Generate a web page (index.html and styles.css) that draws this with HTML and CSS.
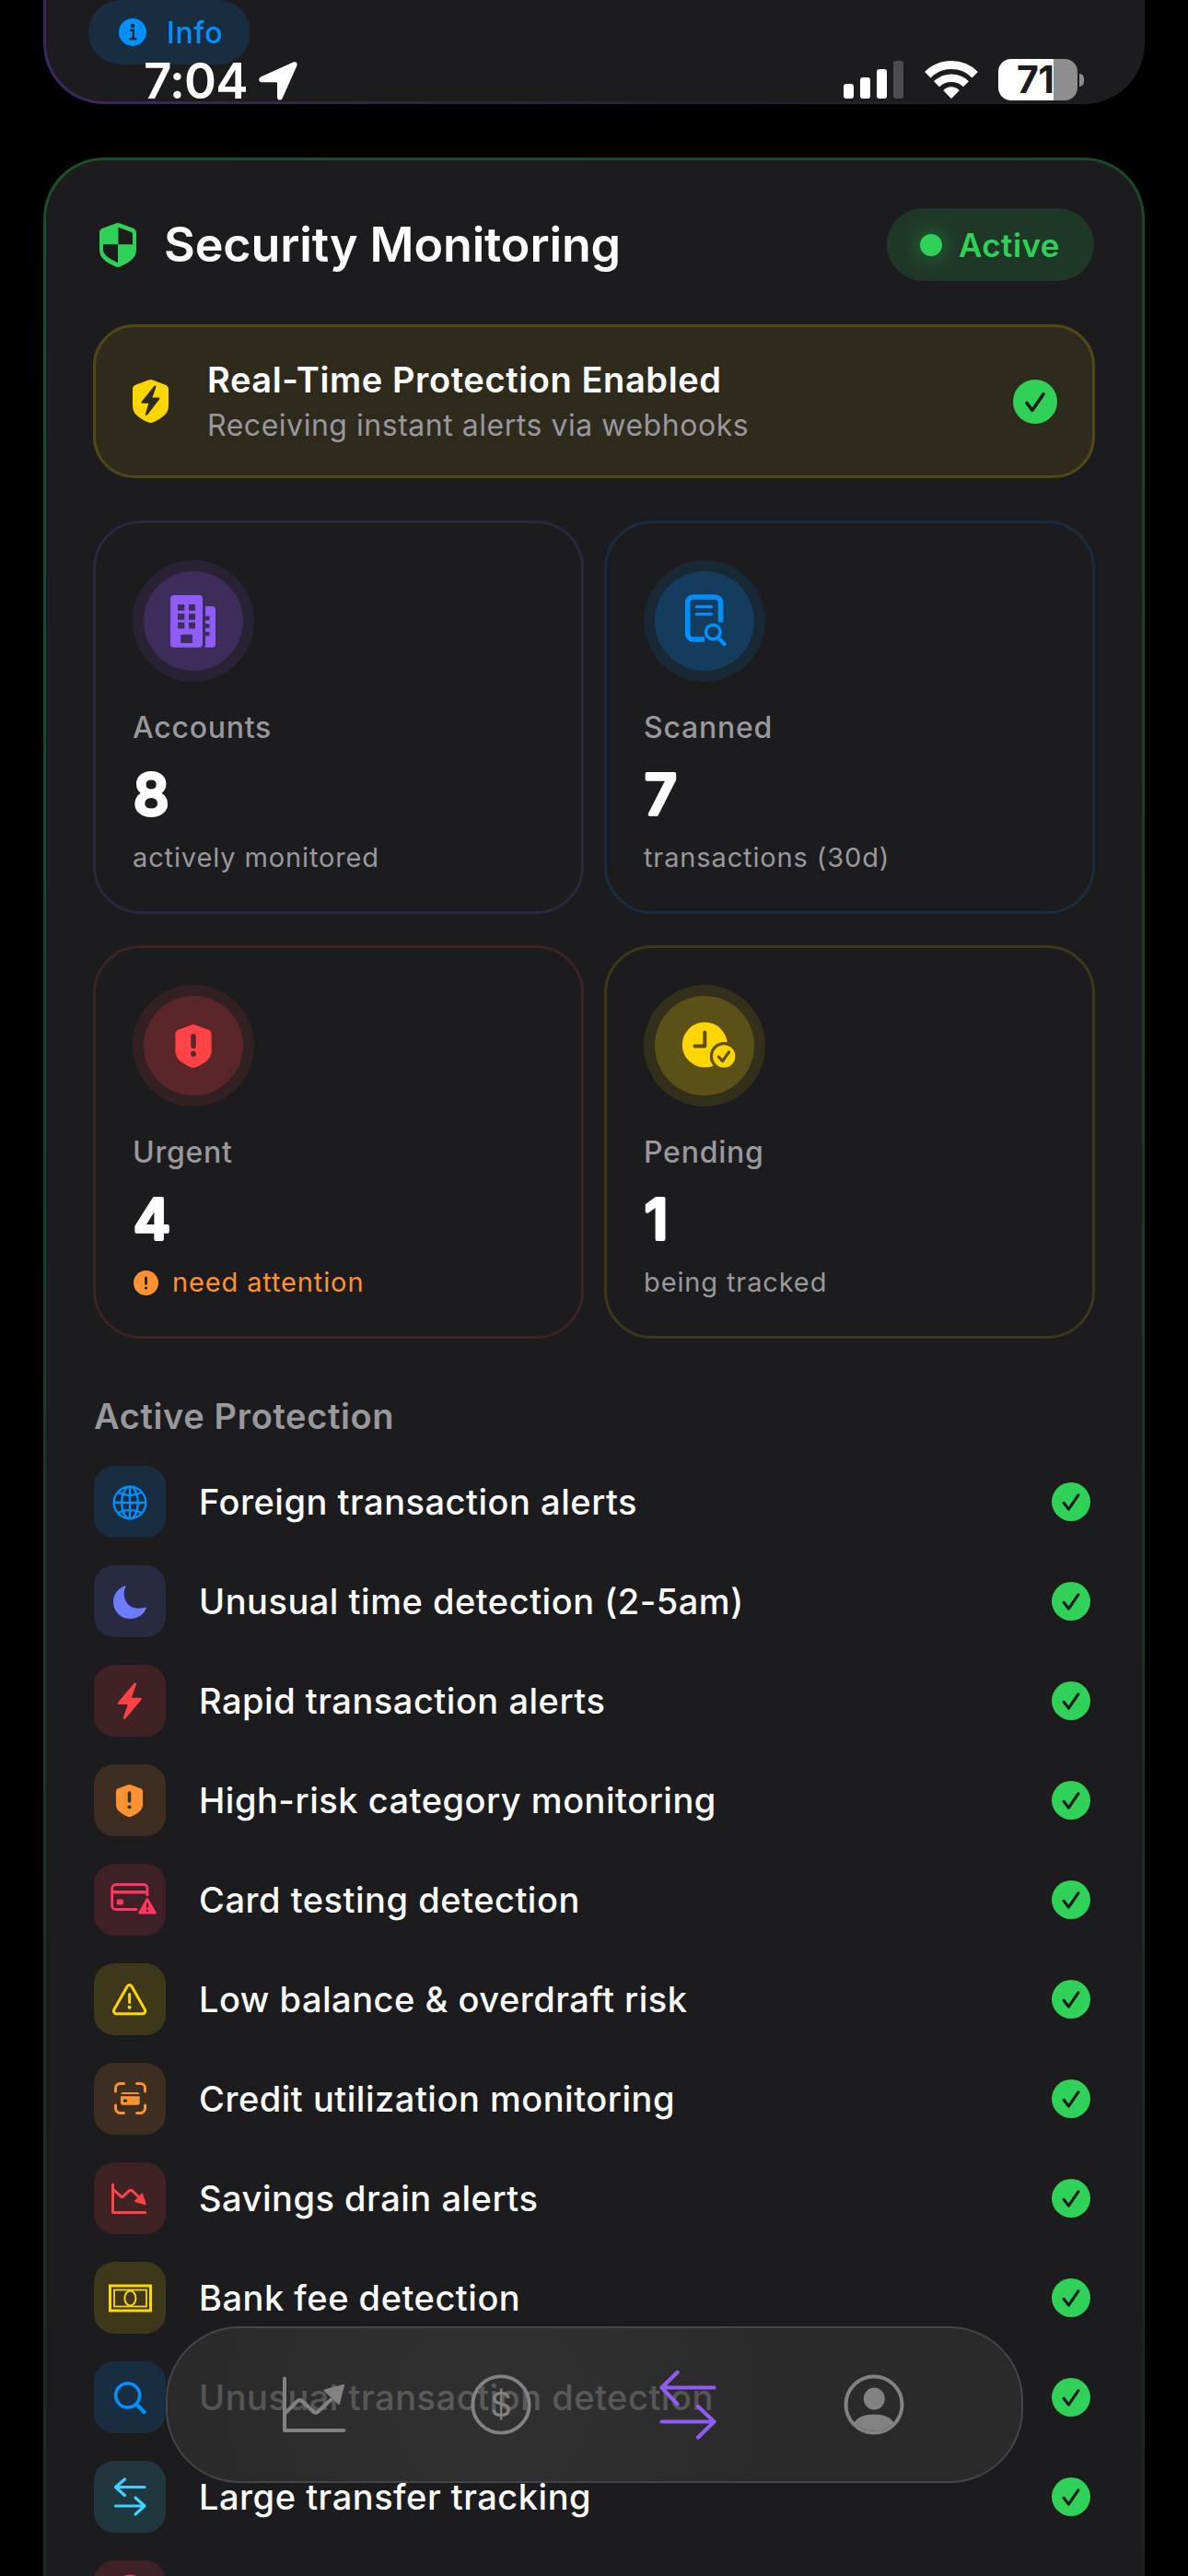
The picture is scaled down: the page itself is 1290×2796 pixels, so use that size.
FILE: index.html
```html
<!DOCTYPE html>
<html lang="en">
<head>
    <meta charset="UTF-8">
    <meta name="viewport" content="width=device-width, initial-scale=1.0">
    <title>Security Monitoring</title>
    <link rel="stylesheet" href="styles.css">
</head>
<body>
    <!-- Shared icon shapes -->
    <svg class="defs" width="0" height="0">
        <symbol id="check" viewBox="0 0 48 48">
            <circle cx="24" cy="24" r="24" fill="#30d158"/>
            <path d="M15 25.500L21 33.300L33 15.800" fill="none" stroke="#1c1c1e" stroke-width="3.600" stroke-linecap="round" stroke-linejoin="round"/>
        </symbol>
        <symbol id="shield" viewBox="0 0 40 48">
            <path fill="currentColor" d="M20 0c1 0 2 .3 3 .7l13 4.800c2.700 1 4 2.500 4 5V29c0 8.500-6 13-17 18.300-1 .5-2 .7-3 .7s-2-.2-3-.7C6 42 0 37.500 0 29V10.500C0 8 1.300 6.500 4 5.500L17 .7C18 .3 19 0 20 0Z"/>
        </symbol>
    </svg>

    <div class="status-bar">
        <div class="status-left">
            <span class="time">7:04</span>
            <svg width="42" height="42" viewBox="0 0 42 42"><path fill="#fff" d="M37.500.6L2.500 16.300C-1 18-.3 22.300 3.300 22.300H18.500C19.500 22.300 20 22.800 20 23.800V38.500C20 42.300 24.300 42.500 25.700 39.500L41.300 4.500C42.500 1.500 40.500-.7 37.500.6Z"/></svg>
        </div>
        <div class="status-right">
            <svg width="65" height="45" viewBox="0 0 65 45" fill="#fff">
                <rect x="0" y="27" width="11" height="16" rx="3"/>
                <rect x="18" y="20" width="11" height="23" rx="3"/>
                <rect x="36" y="11" width="11" height="32" rx="3"/>
                <rect x="54" y="2" width="11" height="41" rx="3" opacity=".22"/>
            </svg>
            <svg class="wifi" width="58" height="45" viewBox="0 0 58 45" fill="none" stroke="#fff">
                <path d="M3.300 17.200A36.500 36.500 0 0 1 54.700 17.200" stroke-width="9"/>
                <path d="M13 27.300A22.700 22.700 0 0 1 45 27.300" stroke-width="8.500"/>
                <path d="M29 43L20.300 34.300C24.500 29 33.500 29 37.700 34.300Z" fill="#fff" stroke="none"/>
            </svg>
            <div class="battery"><span>71</span></div>
            <div class="battery-nub"></div>
        </div>
    </div>

    <section class="card card-prev">
        <div class="info-pill">
            <svg width="30" height="30" viewBox="0 0 30 30">
                <circle cx="15" cy="15" r="15" fill="#0091ff"/>
                <circle cx="15" cy="8" r="2.300" fill="#192d40"/>
                <path d="M12 12.800H15.800V22M11.300 22.300H19.500" fill="none" stroke="#192d40" stroke-width="2.400"/>
            </svg>
            <span>Info</span>
        </div>
    </section>

    <section class="card card-security">
        <header class="card-header">
            <svg width="40" height="48" viewBox="0 0 40 48" color="#30d158">
                <use href="#shield"/>
                <path fill="#1c1c1e" d="M20.500 4.800L33.500 9.600C35 10.200 36 11 36 12.500V23.300H20.500ZM4 23.300H20V43.200C9 38 4 34.500 4 28Z"/>
            </svg>
            <h1>Security Monitoring</h1>
            <div class="active-pill"><i class="dot"></i><span>Active</span></div>
        </header>

        <div class="banner">
            <svg width="39" height="47" viewBox="0 0 40 48" color="#ffd600">
                <use href="#shield"/>
                <path fill="#2e2b1d" d="M23.500 7.500L10 24.500C9.300 25.500 9.800 26.300 11 26.300H17.800L14.300 38C13.800 39.800 15.500 40.300 16.500 39L29.700 22C30.500 21 30 20 28.800 20H22L26 8.300C26.500 6.500 24.700 6 23.500 7.500Z"/>
            </svg>
            <div class="banner-text">
                <h2>Real-Time Protection Enabled</h2>
                <p>Receiving instant alerts via webhooks</p>
            </div>
            <svg width="48" height="48"><use href="#check"/></svg>
        </div>

        <div class="stats">
            <div class="stat purple">
                <div class="stat-icon">
                    <svg viewBox="0 0 132 132" fill="currentColor">
                        <path fill-rule="evenodd" d="M45 38H72A4 4 0 0 1 76 42V90.700A4 4 0 0 1 72 94.700H45A4 4 0 0 1 41 90.700V42A4 4 0 0 1 45 38ZM49 48V54.700H56.300V48ZM61 48V54.700H68V48ZM49 58V64.700H56.300V58ZM61 58V64.700H68V58ZM49 67.500V74.200H56.300V67.500ZM61 67.500V74.200H68V67.500ZM53.500 80.700A1.200 1.200 0 0 0 52.300 82V90H65V82A1.200 1.200 0 0 0 63.800 80.700Z"/>
                        <path d="M79 50H86A4 4 0 0 1 90 54V90.700A4 4 0 0 1 86 94.700H78L79 92V82.300H83.500V77.700H79V73.700H83.500V69H79V65.300H83.500V60.700H79Z"/>
                    </svg>
                </div>
                <p class="stat-label">Accounts</p>
                <svg class="stat-number" width="60" height="50"><text x="0" y="48.500">8</text></svg>
                <p class="stat-note">actively monitored</p>
            </div>
            <div class="stat blue">
                <div class="stat-icon">
                    <svg viewBox="0 0 132 132" fill="none" stroke="currentColor">
                        <path d="M83.500 67.500V46A6 6 0 0 0 77.500 40H53.700A6 6 0 0 0 47.700 46V80A6 6 0 0 0 53.700 86H66" stroke-width="5.500"/>
                        <path d="M57.500 50.700H73.500M57.500 58.700H73.500" stroke-width="3.300" stroke-linecap="round"/>
                        <circle cx="75.300" cy="78" r="7.800" stroke-width="3.500"/>
                        <path d="M81.500 85L87.500 91" stroke-width="4.300" stroke-linecap="round"/>
                    </svg>
                </div>
                <p class="stat-label">Scanned</p>
                <svg class="stat-number" width="60" height="50"><text x="0" y="48.500">7</text></svg>
                <p class="stat-note">transactions (30d)</p>
            </div>
            <div class="stat red">
                <div class="stat-icon">
                    <svg viewBox="0 0 132 132">
                        <use href="#shield" x="46" y="43" width="40" height="47"/>
                        <path d="M66 55.700V66.500" stroke="#5b2629" stroke-width="5.400" stroke-linecap="round"/>
                        <circle cx="66" cy="74.700" r="3" fill="#5b2629"/>
                    </svg>
                </div>
                <p class="stat-label">Urgent</p>
                <svg class="stat-number" width="60" height="50"><text x="0" y="48.500">4</text></svg>
                <p class="stat-note warn">
                    <svg width="27" height="27" viewBox="0 0 27 27">
                        <circle cx="13.500" cy="13.500" r="13.500" fill="#ff9230"/>
                        <path d="M13.500 7.800V14.500" stroke="#1c1c1e" stroke-width="2.700" stroke-linecap="round"/>
                        <circle cx="13.500" cy="19" r="1.600" fill="#1c1c1e"/>
                    </svg>
                    need attention
                </p>
            </div>
            <div class="stat yellow">
                <div class="stat-icon">
                    <svg viewBox="0 0 132 132">
                        <circle cx="66.300" cy="65" r="24.500" fill="currentColor"/>
                        <path d="M66.300 51.500V66.500H55.500" fill="none" stroke="#5b5016" stroke-width="4" stroke-linecap="round" stroke-linejoin="round"/>
                        <circle cx="87.200" cy="77.500" r="13.800" fill="currentColor" stroke="#5b5016" stroke-width="3.200"/>
                        <path d="M81.500 78.300L85.700 82.500L92.500 73" fill="none" stroke="#5b5016" stroke-width="3.200" stroke-linecap="round" stroke-linejoin="round"/>
                    </svg>
                </div>
                <p class="stat-label">Pending</p>
                <svg class="stat-number" width="60" height="50"><text x="0" y="48.500">1</text></svg>
                <p class="stat-note">being tracked</p>
            </div>
        </div>

        <h3 class="list-title">Active Protection</h3>
        <ul class="protections">
            <li>
                <svg class="tile blue" viewBox="0 0 78 78" fill="none" stroke="currentColor" stroke-width="2.300">
                    <circle cx="39" cy="40" r="17.300"/>
                    <ellipse cx="39" cy="40" rx="8.800" ry="17.300"/>
                    <path d="M39 22.700V57.300M21.700 40H56.300M26 28.500C33 33 45 33 52 28.500M26 51.500C33 47 45 47 52 51.500"/>
                </svg>
                <span>Foreign transaction alerts</span>
                <svg class="ok"><use href="#check"/></svg>
            </li>
            <li>
                <svg class="tile indigo" viewBox="0 0 78 78"><path fill="currentColor" d="M33 22.500C26 25 21 32 21 39.700C21 50 29 58 39.500 58C47 58 54 53.500 56.500 47.200C57 46 56.200 45.500 55 45.900C43 49 33 43 32.700 31.500C32.600 28 33.500 25.500 34.300 23.500C34.600 22.500 34 22 33 22.500Z"/></svg>
                <span>Unusual time detection (2-5am)</span>
                <svg class="ok"><use href="#check"/></svg>
            </li>
            <li>
                <svg class="tile red" viewBox="0 0 78 78"><path fill="currentColor" d="M43.500 20.300L26.300 40.500C25.300 41.800 26 43 27.400 43H36.800L32 56.800C31.400 58.800 33 59.600 34.300 58.200L51.300 38.300C52.300 37 51.600 35.800 50.200 35.800H40.800L45.800 21.800C46.300 19.800 44.800 18.900 43.500 20.300Z"/></svg>
                <span>Rapid transaction alerts</span>
                <svg class="ok"><use href="#check"/></svg>
            </li>
            <li>
                <svg class="tile orange" viewBox="0 0 78 78">
                    <use href="#shield" x="23.500" y="22" width="30" height="35"/>
                    <path d="M38.500 31V40" stroke="#3e2e21" stroke-width="3.600" stroke-linecap="round"/>
                    <circle cx="38.500" cy="46.300" r="2.100" fill="#3e2e21"/>
                </svg>
                <span>High-risk category monitoring</span>
                <svg class="ok"><use href="#check"/></svg>
            </li>
            <li>
                <svg class="tile pink" viewBox="0 0 78 78" fill="none" stroke="currentColor" stroke-width="2.800">
                    <path d="M58 35V26.500A4 4 0 0 0 54 22.500H23.700A4 4 0 0 0 19.700 26.500V45.500A4 4 0 0 0 23.700 49.500H47"/>
                    <path d="M19.700 30.700H58" stroke-width="3.600"/>
                    <rect x="24.700" y="38.500" width="7.300" height="6" rx="1.500" fill="currentColor" stroke="none"/>
                    <path d="M58 38.500L66.300 53.200H49.700Z" fill="currentColor" stroke-linejoin="round"/>
                    <path d="M58 42.500V47.500M58 49.700V52" stroke="#3e2028" stroke-width="2.200"/>
                </svg>
                <span>Card testing detection</span>
                <svg class="ok"><use href="#check"/></svg>
            </li>
            <li>
                <svg class="tile yellow" viewBox="0 0 78 78" fill="none" stroke="currentColor" stroke-width="3" stroke-linecap="round" stroke-linejoin="round">
                    <path d="M36.200 25C37.500 23 39.800 23 41 25L55.200 50C56.500 52.500 55.300 54.700 52.800 54.700H24.500C22 54.700 20.700 52.500 22 50Z"/>
                    <path d="M38.600 33.500V42.500"/>
                    <circle cx="38.600" cy="47.700" r="2" fill="currentColor" stroke="none"/>
                </svg>
                <span>Low balance &amp; overdraft risk</span>
                <svg class="ok"><use href="#check"/></svg>
            </li>
            <li>
                <svg class="tile orange" viewBox="0 0 78 78" fill="none" stroke="currentColor" stroke-width="3" stroke-linecap="round">
                    <path d="M23.500 31V27.500A5 5 0 0 1 28.500 22.500H32.500M46.500 22.500H50.500A5 5 0 0 1 55.500 27.500V31M55.500 46V49.500A5 5 0 0 1 50.500 54.500H46.500M32.500 54.500H28.500A5 5 0 0 1 23.500 49.500V46"/>
                    <path d="M31 32H48A1.800 1.800 0 0 1 49.300 34H29.500A1.800 1.800 0 0 1 31 32ZM29 36.200H49.700V43.500A2.300 2.300 0 0 1 47.500 45.800H31.200A2.300 2.300 0 0 1 29 43.500Z" fill="currentColor" stroke="none"/>
                    <rect x="32" y="39.700" width="4" height="3" fill="#3e2e21" stroke="none"/>
                </svg>
                <span>Credit utilization monitoring</span>
                <svg class="ok"><use href="#check"/></svg>
            </li>
            <li>
                <svg class="tile red" viewBox="0 0 78 78" fill="none" stroke="currentColor" stroke-width="3" stroke-linecap="round" stroke-linejoin="round">
                    <path d="M20.500 24V54.500H55.700"/>
                    <path d="M21.500 30L29 36.700C30 37.700 31 37.700 32 36.700L38 31.200C39.300 30 40.500 30 41.800 31.200L49 38"/>
                    <path d="M56 45.500L44.700 42.300L52.300 34.300Z" fill="currentColor" stroke-width="1.500"/>
                </svg>
                <span>Savings drain alerts</span>
                <svg class="ok"><use href="#check"/></svg>
            </li>
            <li>
                <svg class="tile yellow" viewBox="0 0 78 78" fill="none" stroke="currentColor">
                    <rect x="17.500" y="26" width="44" height="27" stroke-width="3"/>
                    <rect x="22" y="30.500" width="35" height="18" stroke-width="1.800"/>
                    <ellipse cx="39.400" cy="39.500" rx="6" ry="8" stroke-width="2"/>
                </svg>
                <span>Bank fee detection</span>
                <svg class="ok"><use href="#check"/></svg>
            </li>
            <li>
                <svg class="tile blue" viewBox="0 0 78 78" fill="none" stroke="currentColor" stroke-width="3.600" stroke-linecap="round">
                    <circle cx="36.700" cy="37" r="13"/>
                    <path d="M46.500 47L54.500 55" stroke-width="4.500"/>
                </svg>
                <span>Unusual transaction detection</span>
                <svg class="ok"><use href="#check"/></svg>
            </li>
            <li>
                <svg class="tile cyan" viewBox="0 0 78 78" fill="none" stroke="currentColor" stroke-width="3.200" stroke-linecap="round" stroke-linejoin="round">
                    <path d="M55 28.500H23.500M33.500 20L23.500 28.500L33.500 37.500M23.500 49H55M45 40L55 49L45 58"/>
                </svg>
                <span>Large transfer tracking</span>
                <svg class="ok"><use href="#check"/></svg>
            </li>
            <li>
                <svg class="tile pink" viewBox="0 0 78 78" fill="none" stroke="currentColor" stroke-width="3"><circle cx="39" cy="34" r="17"/></svg>
            </li>
        </ul>
    </section>

    <nav class="tab-bar">
        <a href="#">
            <svg width="78" height="78" viewBox="0 0 78 78" fill="none" stroke="currentColor" stroke-width="4" stroke-linecap="round" stroke-linejoin="round">
                <path d="M6 10.500V67H70.500"/>
                <path d="M7 48L19.500 35.500C21.500 33.700 23.500 33.700 25.500 35.500L36.500 46C38.500 48 41 48 43 46L56.500 33.500"/>
                <path d="M70 18L49.500 23.500L65 38Z" fill="currentColor" stroke-width="2"/>
            </svg>
        </a>
        <a href="#">
            <svg width="78" height="78" viewBox="0 0 78 78">
                <circle cx="39" cy="39" r="30.700" fill="none" stroke="currentColor" stroke-width="3.800"/>
                <text x="39" y="52" class="dollar">$</text>
            </svg>
        </a>
        <a href="#" class="current">
            <svg width="78" height="78" viewBox="0 0 78 78" fill="none" stroke="currentColor" stroke-width="4.200" stroke-linecap="round" stroke-linejoin="round">
                <path d="M67.500 20.500H10.500M27.500 4L10.500 20.500L27.500 38.500M10.500 57.500H67.500M50 41L67.500 57.500L50 74.500"/>
            </svg>
        </a>
        <a href="#">
            <svg width="78" height="78" viewBox="0 0 78 78">
                <circle cx="39" cy="39" r="30.500" fill="none" stroke="currentColor" stroke-width="4"/>
                <ellipse cx="39.300" cy="32.500" rx="11.500" ry="12" fill="currentColor"/>
                <path d="M17.500 58.500C24 46.500 54 46.500 60.500 58.500A30 30 0 0 1 17.500 58.500Z" fill="currentColor"/>
            </svg>
        </a>
    </nav>
</body>
</html>
```
FILE: styles.css
```css
/* General Styling */
* {
    box-sizing: border-box;
}
html {
    overflow: hidden;
}
body {
    margin: 0;
    position: relative;
    width: 1290px;
    height: 2796px;
    overflow: hidden;
    background: #000;
    color: #fff;
    font-family: Inter, "Liberation Sans", sans-serif;
}
h1, h2, h3, p, ul {
    margin: 0;
    padding: 0;
}
svg {
    flex: none;
}
.defs {
    position: absolute;
}

/* Colours */
.purple { color: #8f5cf7; }
.blue { color: #0091ff; }
.red { color: #ff4245; }
.yellow { color: #ffd600; }
.indigo { color: #6d7cff; }
.orange { color: #ff9230; }
.pink { color: #ff375f; }
.cyan { color: #3cd3fe; }

/* Status bar, floats over the scrolled content */
.status-bar {
    position: absolute;
    top: 64px;
    left: 0;
    right: 0;
    z-index: 2;
    display: flex;
    justify-content: space-between;
    padding: 0 113px 0 156px;
}
.status-left, .status-right {
    display: flex;
    align-items: center;
    height: 48px;
}
.status-right {
    height: 45px;
}
.time {
    width: 126px;
    font-size: 53px;
    font-weight: 600;
    letter-spacing: -0.8px;
    line-height: 48px;
    white-space: nowrap;
}
.status-left svg {
    margin-left: -1px;
}
.wifi {
    margin: 0 22px 0 23px;
}
.battery {
    width: 86px;
    height: 45px;
    border-radius: 14px;
    background: linear-gradient(90deg, #fff 60px, #8e8e8e 60px);
    color: #1c1c1e;
    font-size: 41px;
    font-weight: 700;
    letter-spacing: -0.5px;
    line-height: 45px;
    padding-left: 20px;
}
.battery-nub {
    width: 5px;
    height: 14px;
    margin-left: 2px;
    border-radius: 0 5px 5px 0;
    background: #8e8e8e;
}

/* Cards */
.card {
    margin: 0 47px;
    border: 3px solid transparent;
    border-radius: 66px;
}
.card-prev {
    height: 113px;
    padding-left: 46px;
    border-top: 0;
    border-radius: 0 0 66px 66px;
    background: linear-gradient(#1c1c1e, #1c1c1e) padding-box,
        linear-gradient(90deg, #3b2861, #1c1c1e 90%) border-box;
}
.info-pill {
    display: flex;
    align-items: center;
    gap: 22px;
    width: 176px;
    height: 70px;
    padding-left: 33px;
    border-radius: 35px;
    background: #192d40;
    color: #0091ff;
    font-size: 32px;
    font-weight: 500;
    letter-spacing: 0.7px;
}
.card-security {
    height: 2900px;
    margin-top: 58px;
    padding: 52px;
    background: linear-gradient(#1c1c1e, #1c1c1e) padding-box,
        linear-gradient(157deg, #1b4f2b, #1c1f1f) border-box;
}
.card-header {
    display: flex;
    align-items: center;
    height: 79px;
    padding-left: 6px;
}
.card-header h1 {
    margin-left: 30px;
    font-size: 52px;
    font-weight: 600;
    letter-spacing: -0.12px;
}
.active-pill {
    display: flex;
    align-items: center;
    gap: 18px;
    width: 225px;
    height: 79px;
    margin-left: auto;
    padding-left: 36px;
    border-radius: 40px;
    background: #1f3727;
    color: #30d158;
    font-size: 35px;
    font-weight: 600;
    letter-spacing: 0.4px;
}
.dot {
    width: 24px;
    height: 24px;
    border-radius: 50%;
    background: #30d158;
    box-shadow: 0 0 24px rgba(48, 209, 88, 0.5);
}

/* Banner */
.banner {
    display: flex;
    align-items: center;
    height: 167px;
    margin: 47px -1px 46px;
    padding: 0 38px 0 40px;
    border: 3px solid #514717;
    border-radius: 45px;
    background: #2e2b1d;
}
.banner-text {
    flex: 1;
    margin-left: 42px;
    padding-top: 2px;
    line-height: 49px;
}
.banner h2 {
    font-size: 38px;
    font-weight: 600;
    letter-spacing: 0.6px;
    line-height: 49px;
}
.banner p {
    color: #98989d;
    font-size: 32px;
    letter-spacing: 0.53px;
}

/* Stats */
.stats {
    display: grid;
    grid-template-columns: 1fr 1fr;
    gap: 34px 22px;
    margin: 0 -1px;
}
.stat {
    height: 427px;
    padding: 40px;
    border: 3px solid color-mix(in srgb, currentColor 15%, #1c1c1e);
    border-radius: 52px;
}
.stat-icon {
    position: relative;
    width: 132px;
    height: 132px;
    border-radius: 50%;
    background: color-mix(in srgb, currentColor 10%, #1c1c1e);
    padding: 12px;
}
.stat-icon::before {
    content: "";
    display: block;
    height: 108px;
    border-radius: 50%;
    background: color-mix(in srgb, currentColor 20%, transparent);
}
.stat-icon svg {
    position: absolute;
    inset: 0;
}
.stat-label {
    margin-top: 30px;
    color: #98989d;
    font-size: 32px;
    font-weight: 500;
    letter-spacing: 0.75px;
    line-height: 40px;
}
.stat-number {
    display: block;
    margin-top: 26px;
    overflow: visible;
    fill: #fff;
    stroke: #fff;
    stroke-width: 4px;
    stroke-linejoin: round;
    font-size: 61px;
    font-weight: 500;
}
.stat-number text {
    transform: translate(1px, -1px);
}
.stat-note {
    display: flex;
    align-items: center;
    gap: 15px;
    margin-top: 27px;
    color: #98989d;
    font-size: 29px;
    letter-spacing: 0.87px;
    line-height: 36px;
}
.warn {
    color: #ff9230;
}
.warn svg {
    margin-left: 1px;
}

/* Protection list */
.list-title {
    margin: 61px 0 31px;
    color: #98989d;
    font-size: 38px;
    font-weight: 600;
    letter-spacing: 0.63px;
    line-height: 46px;
}
.protections {
    display: flex;
    flex-direction: column;
    gap: 30px;
    list-style: none;
}
.protections li {
    display: flex;
    align-items: center;
    height: 78px;
    padding-right: 4px;
    font-size: 38px;
    font-weight: 500;
    letter-spacing: 0.52px;
}
.protections span {
    flex: 1;
    margin-left: 36px;
}
.tile {
    width: 78px;
    height: 78px;
    border-radius: 22px;
    background: color-mix(in srgb, currentColor 15%, #1c1c1e);
}
.ok {
    width: 42px;
    height: 42px;
}

/* Floating tab bar */
.tab-bar {
    position: absolute;
    top: 2525px;
    left: 180px;
    width: 931px;
    height: 170px;
    display: flex;
    align-items: center;
    padding: 0 59px;
    border: 2px solid #454547;
    border-radius: 80px;
    background: radial-gradient(circle at 38% 50%, rgba(53, 53, 53, 0.81), rgba(45, 45, 46, 0.82) 60%);
}
.tab-bar a {
    flex: 1;
    display: flex;
    justify-content: center;
    color: #828282;
}
.tab-bar .current {
    color: #8f5cf7;
}
.dollar {
    fill: currentColor;
    font-size: 37px;
    text-anchor: middle;
}
```
